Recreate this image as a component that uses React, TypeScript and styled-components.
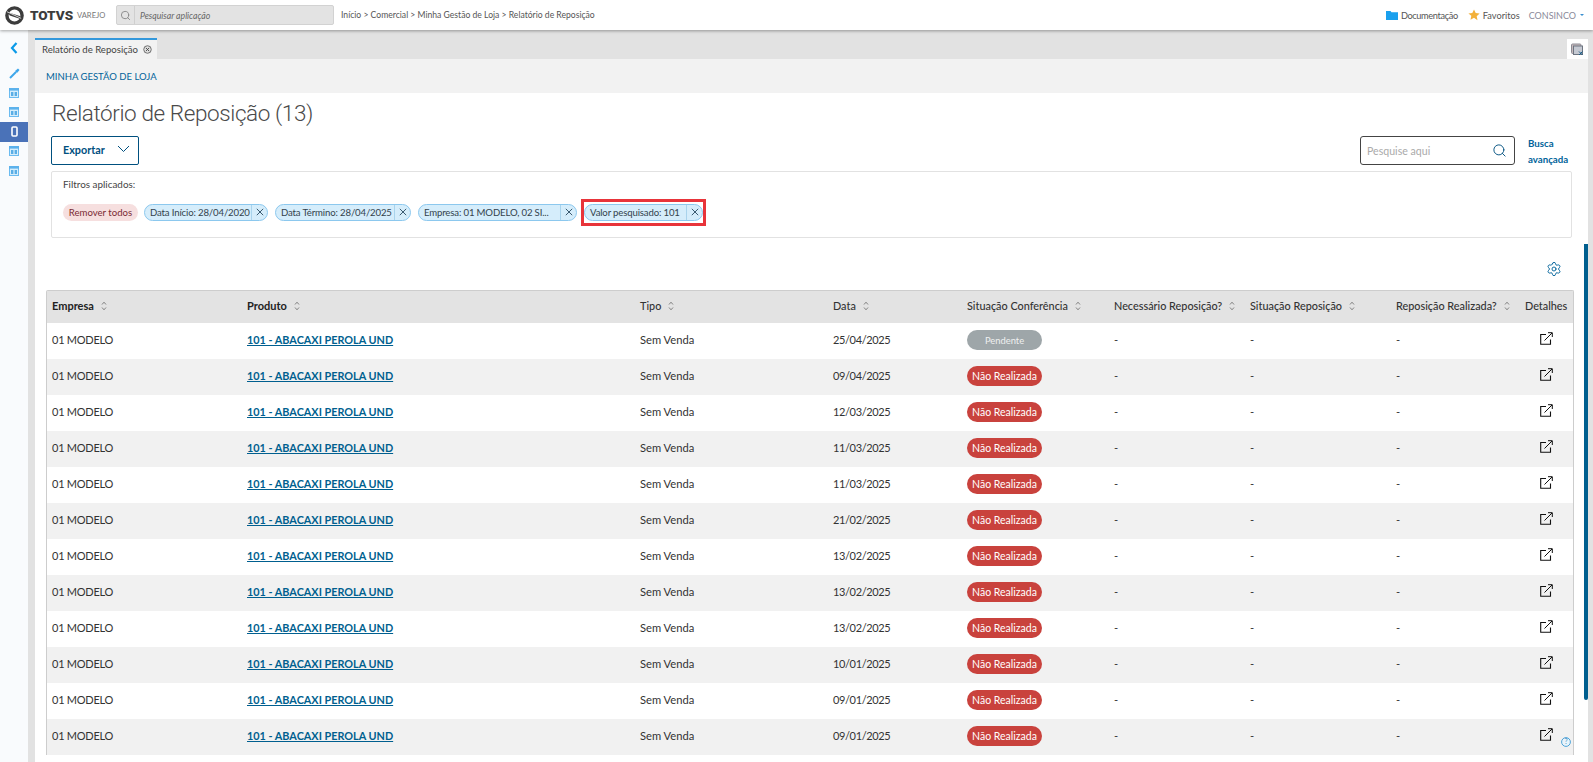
import React from "react";
import styled, { createGlobalStyle } from "styled-components";
import { Search, Settings } from "lucide-react";

const Global = createGlobalStyle`
  html, body { margin: 0; padding: 0; height: 100%; overflow: hidden; background: #fff; }
  body { font-family: Lato, "Noto Sans", sans-serif; color: #333; font-size: 12px; }
  * { box-sizing: border-box; }
`;

const Page = styled.div`
  position: relative;
  width: 1593px;
  height: 762px;
  overflow: hidden;
  display: flex;
  flex-direction: column;
`;

const TopBar = styled.header`
  position: relative;
  z-index: 2;
  flex: 0 0 30px;
  height: 30px;
  display: flex;
  align-items: center;
  background: #fff;
  box-shadow: 0 1px 3px rgba(0, 0, 0, 0.35);
  padding-left: 5px;
`;
const LogoMark = styled.svg`
  width: 19px;
  height: 19px;
  flex: none;
`;
const LogoWord = styled.span`
  margin-left: 6px;
  font-family: Roboto, sans-serif;
  font-weight: 900;
  font-size: 13.5px;
  color: #3c3c3c;
  width: 47px;
`;
const LogoSub = styled.span`
  font-size: 7.6px;
  color: #777;
  width: 39px;
`;
const AppSearch = styled.div`
  width: 218px;
  height: 20px;
  display: flex;
  background: #e3e3e3;
  border: 1px solid #d2d2d2;
  border-radius: 2px;
  align-items: center;
  color: #666;
`;
const AppSearchIcon = styled.span`
  flex: 0 0 18px;
  height: 100%;
  display: flex;
  align-items: center;
  justify-content: center;
  border-right: 1px solid #cfcfcf;
  color: #888;
`;
const AppSearchText = styled.span`
  margin-left: 5px;
  font-style: italic;
  font-size: 8.7px;
  color: #666;
`;
const Crumbs = styled.nav`
  margin-left: 7px;
  font-size: 8.6px;
  color: #555;
`;
const TopRight = styled.div`
  margin-left: auto;
  display: flex;
  align-items: center;
  font-size: 9.2px;
  color: #555;
  padding-right: 9px;
`;
const TopLink = styled.span<{ $tight?: boolean }>`
  display: flex;
  align-items: center;
  gap: 3px;
  margin-right: ${(p) => (p.$tight ? 10 : 9)}px;
  letter-spacing: ${(p) => (p.$tight ? "-0.35px" : "0")};
`;
const UserName = styled.span`
  color: #8a8a9a;
  font-size: 9px;
  display: flex;
  align-items: center;
  gap: 4px;
`;
const Caret = styled.i`
  width: 0;
  height: 0;
  border-left: 2px solid transparent;
  border-right: 2px solid transparent;
  border-top: 2px solid #3a8fd0;
`;

const Body = styled.div`
  flex: 1;
  display: flex;
  min-height: 0;
`;
const Side = styled.aside`
  flex: 0 0 28px;
  background: #f9fbfd;
  display: flex;
  flex-direction: column;
  align-items: stretch;
  padding-top: 8px;
`;
const SideItem = styled.div<{ $active?: boolean; $h?: number; $pt?: number }>`
  height: ${(p) => p.$h ?? 19.5}px;
  padding-top: ${(p) => p.$pt ?? 0}px;
  display: flex;
  align-items: center;
  justify-content: center;
  background: ${(p) => (p.$active ? "#4a72b8" : "transparent")};
`;

const Workspace = styled.div`
  flex: 1;
  min-width: 0;
  display: flex;
  flex-direction: column;
  background: #e2e2e2;
  padding-left: 7px;
  padding-right: 5px;
`;
const TabStrip = styled.div`
  flex: 0 0 29px;
  display: flex;
  align-items: flex-end;
  justify-content: space-between;
  padding-top: 8px;
`;
const Tab = styled.div`
  width: 122px;
  height: 21px;
  background: #f2f2f2;
  border-top: 2px solid #3498db;
  display: flex;
  align-items: center;
  padding-left: 7px;
  gap: 5px;
  font-size: 9.6px;
  color: #444;
  white-space: nowrap;
`;
const TabClose = styled.svg`
  width: 9px;
  height: 9px;
  flex: none;
`;
const CloseAll = styled.div`
  width: 21px;
  height: 20px;
  background: #fff;
  display: flex;
  align-items: center;
  justify-content: center;
`;
const SubHeader = styled.div`
  flex: 0 0 34px;
  background: #f2f2f2;
  display: flex;
  align-items: center;
  padding-left: 11px;
  font-size: 9.5px;
  color: #00639a;
`;
const Content = styled.main`
  flex: 1;
  min-height: 0;
  background: #fff;
  padding: 0 16px 0 11px;
  overflow: hidden;
`;
const Title = styled.h1`
  margin: 0;
  height: 43px;
  padding: 0 0 4px 6px;
  display: flex;
  align-items: center;
  font-family: Roboto, sans-serif;
  font-weight: 300;
  font-size: 22.5px;
  letter-spacing: -0.4px;
  color: #4a4a4a;
`;
const ToolRow = styled.div`
  display: flex;
  align-items: center;
  padding-left: 5px;
  height: 29px;
`;
const ExportBtn = styled.button`
  width: 88px;
  height: 29px;
  background: #fff;
  border: 1px solid #00507f;
  border-radius: 2px;
  display: flex;
  align-items: center;
  padding: 0 0 3px 11px;
  gap: 12px;
  font: 700 10.8px Lato, sans-serif;
  color: #00507f;
`;
const SearchBox = styled.div`
  margin-left: auto;
  width: 155px;
  height: 29px;
  border: 1px solid #444;
  border-radius: 3px;
  display: flex;
  align-items: center;
  justify-content: space-between;
  padding: 0 7px 0 6px;
  color: #aaa;
  font-size: 10.6px;
`;
const Advanced = styled.a`
  width: 44px;
  margin-left: 13px;
  padding-top: 1px;
  font-weight: 700;
  font-size: 9.7px;
  line-height: 16px;
  color: #00639a;
`;
const FilterPanel = styled.section`
  margin: 6px 0 0 5px;
  height: 67px;
  border: 1px solid #e2e2e2;
  border-radius: 2px;
  padding: 6px 11px;
`;
const FilterLabel = styled.div`
  font-size: 9.9px;
  color: #444;
  line-height: 12px;
`;
const Chips = styled.div`
  margin-top: 14px;
  display: flex;
  align-items: center;
  gap: 6px;
  height: 16px;
`;
const RemoveAll = styled.span`
  width: 75px;
  height: 17px;
  border-radius: 9px;
  background: #f6dfdf;
  color: #7a2a33;
  font-size: 9.6px;
  display: flex;
  align-items: center;
  justify-content: center;
`;
const Chip = styled.span<{ $w: number }>`
  position: relative;
  width: ${(p) => p.$w}px;
  height: 17px;
  flex: none;
  display: flex;
  align-items: center;
  border-radius: 9px;
  border: 1px solid #8cc8ee;
  background: #d5edfb;
  color: #33424c;
  font-size: 9.6px;
  letter-spacing: -0.15px;
  padding-left: 5px;
  margin-right: 1px;
`;
const ChipText = styled.span`
  flex: 1;
  white-space: nowrap;
`;
const ChipClose = styled.span`
  flex: 0 0 16px;
  height: 100%;
  display: flex;
  align-items: center;
  justify-content: center;
  border-left: 1px solid #a9d3ec;
`;
const Marker = styled.span`
  position: absolute;
  left: -4px;
  top: -6px;
  right: -4px;
  bottom: -6px;
  border: 3px solid #e8343a;
  pointer-events: none;
`;
const GearRow = styled.div`
  height: 52px;
  display: flex;
  align-items: center;
  justify-content: flex-end;
  padding: 10px 10px 0 0;
  color: #00639a;
`;
const Table = styled.table`
  width: 1526px;
  table-layout: fixed;
  border-collapse: separate;
  border-spacing: 0;
  border-top: 1px solid #cdcdcd;
  border-left: 1px solid #cdcdcd;
  border-right: 1px solid #cdcdcd;
  border-radius: 2px 2px 0 0;
`;
const Th = styled.th`
  height: 32px;
  background: #e3e3e3;
  text-align: left;
  padding: 0 0 3px 5px;
  font-weight: 700;
  font-size: 11px;
  color: #222;
  white-space: nowrap;
`;
const ThPlain = styled(Th)`
  font-weight: 500;
  font-size: 10.85px;
  color: #333;
`;
const SortIcon = styled.svg`
  width: 6px;
  height: 10px;
  margin-left: 7px;
  vertical-align: -1px;
`;
const Tr = styled.tr<{ $odd: boolean }>`
  background: ${(p) => (p.$odd ? "#f1f1f1" : "#fff")};
`;
const Td = styled.td`
  height: 36px;
  padding: 0 0 4px 5px;
  font-size: 11.2px;
  color: #333;
  white-space: nowrap;
`;
const BadgeTd = styled(Td)`
  padding-bottom: 2px;
`;
const CompanyTd = styled(Td)`
  font-size: 11px;
  letter-spacing: -0.25px;
`;
const DateTd = styled(Td)`
  font-size: 11px;
  letter-spacing: -0.37px;
`;
const ProductLink = styled.a`
  color: #005f8f;
  font-weight: 700;
  font-size: 10.85px;
  text-decoration: underline;
`;
const Badge = styled.span<{ $tone: "gray" | "red" }>`
  display: inline-flex;
  align-items: center;
  justify-content: center;
  width: 75px;
  height: 20px;
  border-radius: 10px;
  background: ${(p) => (p.$tone === "gray" ? "#9ea6a9" : "#c9423d")};
  color: ${(p) => (p.$tone === "gray" ? "#eef0f0" : "#fff")};
  font-size: ${(p) => (p.$tone === "gray" ? "9.4px" : "10.5px")};
`;
const ExtIcon = styled.svg`
  width: 13px;
  height: 13px;
  display: block;
  margin: -1px 0 0 15px;
`;
const ScrollThumb = styled.div`
  position: absolute;
  right: 5px;
  top: 244px;
  width: 4px;
  height: 456px;
  background: #005f8f;
  border-radius: 0 0 2px 2px;
`;
const Help = styled.svg`
  position: absolute;
  left: 1561px;
  top: 737px;
  width: 10px;
  height: 10px;
`;

const Cal = () => (
  <svg width="10" height="10" viewBox="0 0 10 10">
    <rect x="0.5" y="0.5" width="9" height="9" fill="#d6eefc" stroke="#6bbbf0" />
    <rect x="0" y="0" width="10" height="2.6" fill="#5cb2ec" />
    <rect x="2" y="4" width="2.4" height="4" fill="#58ade6" />
    <rect x="5.6" y="4" width="2.4" height="4" fill="#58ade6" />
  </svg>
);
const Sort = () => (
  <SortIcon viewBox="0 0 6 10">
    <path d="M1 3.5 3 1.2 5 3.5M1 6.5 3 8.8 5 6.5" fill="none" stroke="#777" strokeWidth="0.9" />
  </SortIcon>
);
const X = () => (
  <svg width="8" height="8" viewBox="0 0 8 8">
    <path d="M.8.8l6.4 6.4M7.2.8.8 7.2" stroke="#3a5a70" strokeWidth="1" />
  </svg>
);

const dates = ["25/04/2025","09/04/2025","12/03/2025","11/03/2025","11/03/2025","21/02/2025","13/02/2025","13/02/2025","13/02/2025","10/01/2025","09/01/2025","09/01/2025"];
const cols = [195,393,193,134,147,136,146,129,53];
const heads = ["Empresa","Produto","Tipo","Data","Situação Conferência","Necessário Reposição?","Situação Reposição","Reposição Realizada?"];

export default function App() {
  return (
    <Page>
      <Global />
      <TopBar>
        <LogoMark viewBox="0 0 20 20">
          <circle cx="10" cy="10" r="8" fill="none" stroke="#3c3c3c" strokeWidth="3.6" />
          <path d="M3 6.5 15.5 10.5 17 14 5 10Z" fill="#3c3c3c" />
          <path d="M2 6 17 13" stroke="#fff" strokeWidth="0.8" />
        </LogoMark>
        <LogoWord>TOTVS</LogoWord>
        <LogoSub>VAREJO</LogoSub>
        <AppSearch>
          <AppSearchIcon><Search size={11} strokeWidth={2} /></AppSearchIcon>
          <AppSearchText>Pesquisar aplicação</AppSearchText>
        </AppSearch>
        <Crumbs>Início &gt; Comercial &gt; Minha Gestão de Loja &gt; Relatório de Reposição</Crumbs>
        <TopRight>
          <TopLink $tight>
            <svg width="12" height="10" viewBox="0 0 12 10">
              <path d="M0 1h4.5l1 1.2H12V10H0Z" fill="#1aa0ee" />
            </svg>
            Documentação
          </TopLink>
          <TopLink>
            <svg width="12" height="12" viewBox="0 0 12 12">
              <path d="M6 .5l1.7 3.6 3.9.5-2.9 2.7.8 3.9L6 8.8l-3.5 1.9.8-3.9L.4 4.6l3.9-.5Z" fill="#f3b13a" />
            </svg>
            Favoritos
          </TopLink>
          <UserName>CONSINCO <Caret /></UserName>
        </TopRight>
      </TopBar>
      <Body>
        <Side>
          <SideItem $h={20}>
            <svg width="8" height="12" viewBox="0 0 8 12"><path d="M6.5 1 2 6l4.5 5" fill="none" stroke="#0b9ae8" strokeWidth="2.2" /></svg>
          </SideItem>
          <SideItem $h={25} $pt={5}>
            <svg width="11" height="11" viewBox="0 0 11 11"><path d="M1 10 7 4" stroke="#3ea6ea" strokeWidth="2" /><path d="M6 3 9 .5 10.5 2 8 5Z" fill="#3ea6ea" /></svg>
          </SideItem>
          <SideItem><Cal /></SideItem>
          <SideItem><Cal /></SideItem>
          <SideItem $active>
            <svg width="7" height="11" viewBox="0 0 7 11"><rect x="1" y="1" width="5" height="9" rx="1" fill="none" stroke="#fff" strokeWidth="1.6" /></svg>
          </SideItem>
          <SideItem><Cal /></SideItem>
          <SideItem><Cal /></SideItem>
        </Side>
        <Workspace>
          <TabStrip>
            <Tab>
              Relatório de Reposição
              <TabClose viewBox="0 0 10 10">
                <circle cx="5" cy="5" r="4.2" fill="#ddd" stroke="#666" />
                <path d="M3.2 3.2l3.6 3.6M6.8 3.2 3.2 6.8" stroke="#444" />
              </TabClose>
            </Tab>
            <CloseAll>
              <svg width="13" height="13" viewBox="0 0 13 13">
                <rect x="0.5" y="1" width="9.5" height="9.5" rx="1" fill="#c7b9bb" stroke="#8d8d96" />
                <rect x="2.5" y="3" width="9" height="8.5" fill="#c5c9d2" stroke="#6d7480" />
                <path d="M8 8.5l3.5 3.5M11.5 8.5 8 12" stroke="#1c5f8a" />
              </svg>
            </CloseAll>
          </TabStrip>
          <SubHeader>MINHA GESTÃO DE LOJA</SubHeader>
          <Content>
            <Title>Relatório de Reposição (13)</Title>
            <ToolRow>
              <ExportBtn>
                Exportar
                <svg width="13" height="8" viewBox="0 0 13 8"><path d="M1 1l5.5 5.5L12 1" fill="none" stroke="#00507f" strokeWidth="1" /></svg>
              </ExportBtn>
              <SearchBox>
                Pesquise aqui
                <Search size={15} strokeWidth={1.5} color="#00507f" />
              </SearchBox>
              <Advanced>Busca avançada</Advanced>
            </ToolRow>
            <FilterPanel>
              <FilterLabel>Filtros aplicados:</FilterLabel>
              <Chips>
                <RemoveAll>Remover todos</RemoveAll>
                <Chip $w={124}><ChipText>Data Início: 28/04/2020</ChipText><ChipClose><X /></ChipClose></Chip>
                <Chip $w={136}><ChipText>Data Término: 28/04/2025</ChipText><ChipClose><X /></ChipClose></Chip>
                <Chip $w={159}><ChipText>Empresa: 01 MODELO, 02 SI...</ChipText><ChipClose><X /></ChipClose></Chip>
                <Chip $w={119}><ChipText>Valor pesquisado: 101</ChipText><ChipClose><X /></ChipClose><Marker /></Chip>
              </Chips>
            </FilterPanel>
            <GearRow><Settings size={16} strokeWidth={1.4} /></GearRow>
            <Table>
              <colgroup>
                {cols.map((w, i) => <col key={i} style={{ width: w }} />)}
              </colgroup>
              <thead>
                <tr>
                  {heads.map((h, i) =>
                    i < 2 ? <Th key={h}>{h}<Sort /></Th> : <ThPlain key={h}>{h}<Sort /></ThPlain>
                  )}
                  <ThPlain>Detalhes</ThPlain>
                </tr>
              </thead>
              <tbody>
                {dates.map((d, i) => (
                  <Tr key={i} $odd={i % 2 === 1}>
                    <CompanyTd>01 MODELO</CompanyTd>
                    <Td><ProductLink>101 - ABACAXI PEROLA UND</ProductLink></Td>
                    <Td>Sem Venda</Td>
                    <DateTd>{d}</DateTd>
                    <BadgeTd>{i === 0 ? <Badge $tone="gray">Pendente</Badge> : <Badge $tone="red">Não Realizada</Badge>}</BadgeTd>
                    <Td>-</Td>
                    <Td>-</Td>
                    <Td>-</Td>
                    <Td>
                      <ExtIcon viewBox="0 0 13 13">
                        <path d="M6 2.5H.7v9.8h9.8V7.5" fill="none" stroke="#111" strokeWidth="1.1" />
                        <path d="M4.5 8.5 12 1M8 .7h4.3V5" fill="none" stroke="#111" strokeWidth="1" />
                      </ExtIcon>
                    </Td>
                  </Tr>
                ))}
              </tbody>
            </Table>
          </Content>
        </Workspace>
      </Body>
      <ScrollThumb />
      <Help viewBox="0 0 10 10">
        <circle cx="5" cy="5" r="4.4" fill="#e9f4fb" stroke="#4ea3d8" />
        <text x="5" y="7.4" fontSize="7" textAnchor="middle" fill="#3d8fc4" fontFamily="Lato">?</text>
      </Help>
    </Page>
  );
}
